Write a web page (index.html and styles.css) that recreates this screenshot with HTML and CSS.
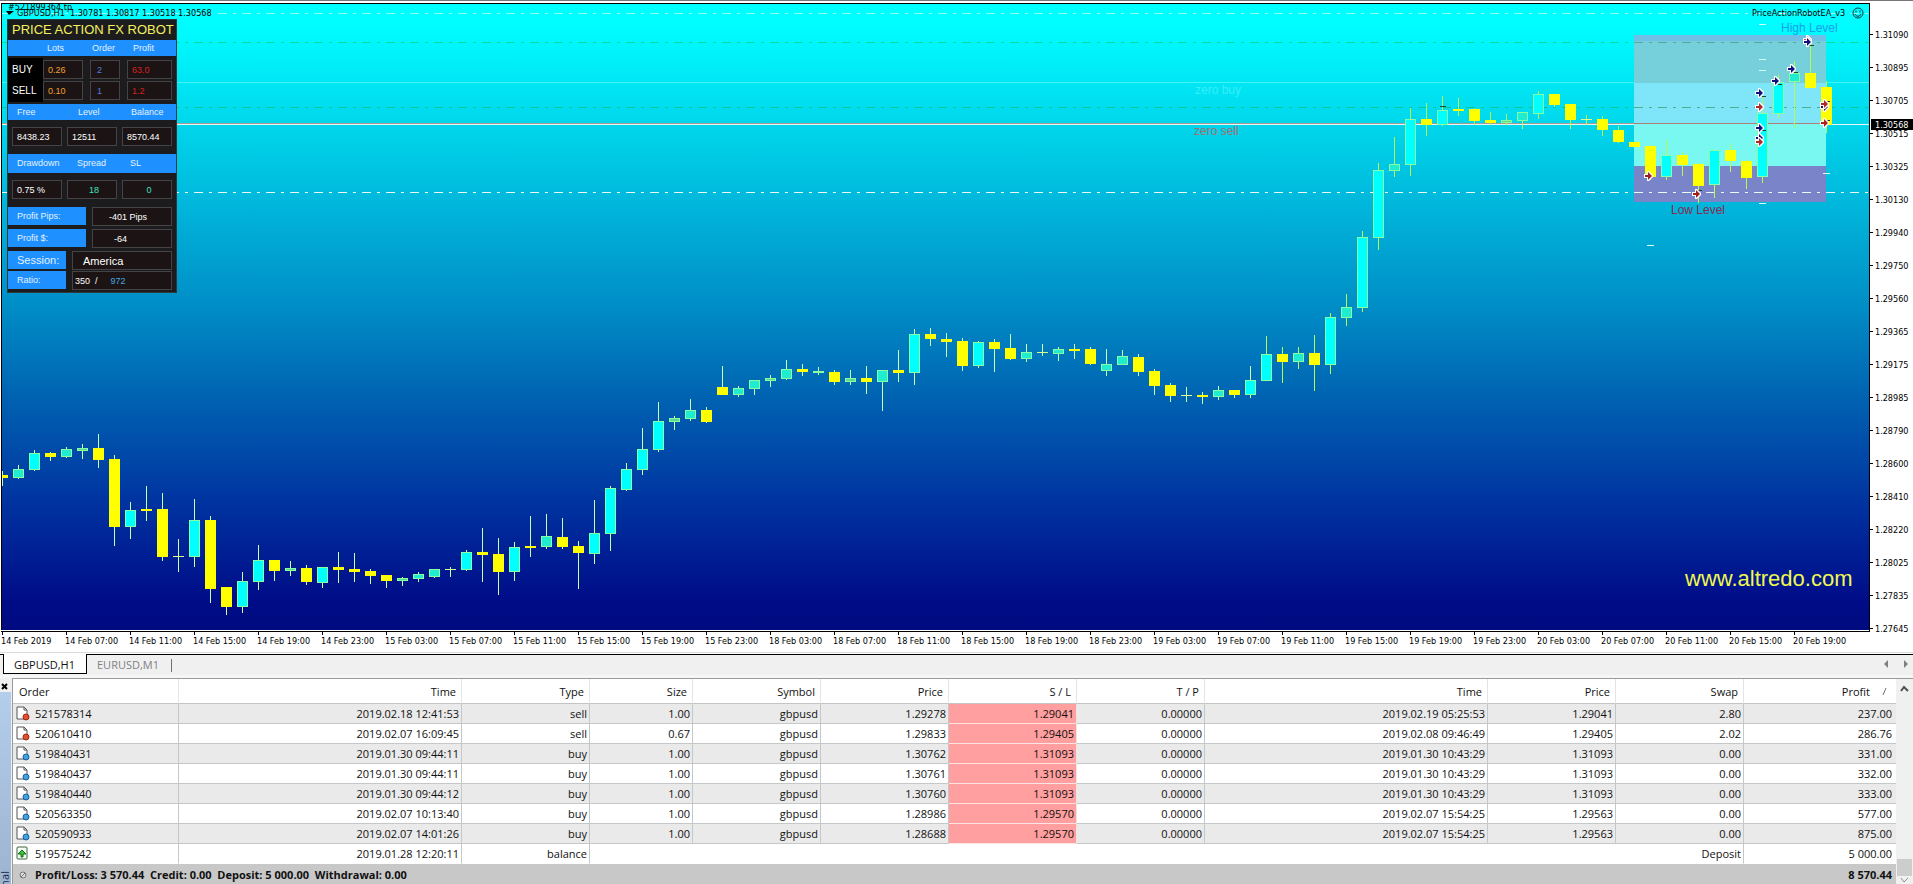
FILE: index.html
```html
<!DOCTYPE html>
<html lang="en">
<head>
<meta charset="utf-8">
<title>GBPUSD,H1</title>
<link rel="stylesheet" href="styles.css">
</head>
<body>
<main class="terminal">
  <section class="chart">
    <svg class="plot" viewBox="0 0 1913 654" role="img" aria-label="GBPUSD H1 candlestick chart">
      <defs>
        <linearGradient id="sky" x1="0" y1="0" x2="0" y2="1">
          <stop offset="0" stop-color="#00ffff"/>
          <stop offset="0.04" stop-color="#00fcff"/>
          <stop offset="0.25" stop-color="#00c8e4"/>
          <stop offset="0.48" stop-color="#008ec7"/>
          <stop offset="0.64" stop-color="#005fb0"/>
          <stop offset="0.8" stop-color="#0032a0"/>
          <stop offset="0.95" stop-color="#000d88"/>
          <stop offset="1" stop-color="#000a80"/>
        </linearGradient>
        <g id="arrow"><path d="M-4-2h3v-3h2l4 4v2l-4 4h-2v-3h-3z" fill="#fff"/><path d="M-3-1h3v-3l4 4-4 4v-3h-3z" fill="currentColor"/></g>
      </defs>
      <g class="crisp">
        <rect width="1913" height="1" fill="#77747a"/>
        <rect x="1" y="3" width="1869" height="1" fill="#000"/>
        <rect x="1" y="3" width="1" height="627" fill="#000"/>
        <rect x="2" y="4" width="1867" height="626" fill="url(#sky)"/>
        <rect x="1869" y="3" width="1" height="629" fill="#000"/>
        <rect x="1" y="631" width="1869" height="1" fill="#000"/>
        <rect y="652" width="1913" height="1" fill="#dcdcdc"/>
        <path class="dash" d="M2 13.5H1869" stroke="#8cffff"/>
        <path class="dash" d="M2 42.5H1869" stroke="#00dc9a"/>
        <path d="M2 82.5H1869" stroke="#40f4fa"/>
        <path class="dash" d="M2 107.5H1869" stroke="#00c896"/>
        <path d="M2 123.5H1634" stroke="#a89890"/>
        <path d="M2 124.5H1869" stroke="#e4f8f8"/>
        <g>
          <rect x="1634" y="35" width="192" height="6" fill="#70bfe4"/>
          <rect x="1634" y="41" width="192" height="42" fill="#76d0dc"/>
          <rect x="1634" y="83" width="192" height="41" fill="#7ee6f8"/>
          <rect x="1634" y="124" width="192" height="42" fill="#78f8f0"/>
          <rect x="1634" y="166" width="192" height="36" fill="#7a84c8"/>
          <path class="dash" d="M1634 42.5H1826" stroke="#56a898"/>
          <path class="dash" d="M1634 107.5H1826" stroke="#4cb090"/>
          <path d="M1634 123.5H1826" stroke="#b08078"/>
        </g>
        <path class="dash" d="M2 192.5H1869" stroke="#e8fafa"/>
        <g id="candles"></g>
        <path d="M1759 24.5h7M1780 13.5h7M1759 59.5h7M1759 70.5h7M1823 173.5h7M1759 203.5h7M1647 245.5h7" stroke="#d8ffff"/>
        <path d="M1440 106.5h6M1762 96.5h4M1778 84.5h4M1794 72.5h4M1809 45.5h5M1762 130.5h4M1824 101.5h6M1824 120.5h6M1697 190.5h5" stroke="#204830"/>
      </g>
      <g id="deals"></g>
      <g class="tick">
        <path d="M6 11h8l-5 4z"/>
        <text x="17" y="16" xml:space="preserve">GBPUSD,H1  1.30781 1.30817 1.30518 1.30568</text>
        <text x="8" y="10">#521899364 tp</text>
        <text x="1752" y="16">PriceActionRobotEA_v3</text>
        <g fill="none" stroke="#003c46"><circle cx="1858" cy="13" r="5"/><path d="M1855 14c1 3 5 3 6 0M1856 10.500v2M1860 10.500v2"/></g>
      </g>
      <g class="note">
        <text x="1781" y="32" fill="#1c9fe8">High Level</text>
        <text x="1671" y="214" fill="#8a2850">Low Level</text>
        <text x="1195" y="94" fill="#38eef8">zero buy</text>
        <text x="1194" y="135" fill="#a07070">zero sell</text>
      </g>
      <text class="brand" x="1685" y="586">www.altredo.com</text>
      <g id="axes" class="tick"></g>
    </svg>

    <div class="robot">
      <h1 class="robot-title">PRICE ACTION FX ROBOT</h1>
      <div class="bar bar-lots"><span>Lots</span><span>Order</span><span>Profit</span></div>
      <div class="lots">
        <div class="sides"><span>BUY</span><span>SELL</span></div>
        <span class="cell orange">0.26</span><span class="cell blue">2</span><span class="cell red">63.0</span>
        <span class="cell orange">0.10</span><span class="cell blue">1</span><span class="cell red">1.2</span>
      </div>
      <div class="bar bar-three"><span>Free</span><span>Level</span><span>Balance</span></div>
      <div class="trio"><span class="cell">8438.23</span><span class="cell">12511</span><span class="cell">8570.44</span></div>
      <div class="bar bar-three bar-tall"><span>Drawdown</span><span>Spread</span><span>SL</span></div>
      <div class="trio"><span class="cell">0.75 %</span><span class="cell teal mid">18</span><span class="cell teal mid">0</span></div>
      <div class="pair"><span class="tag">Profit Pips:</span><span class="cell pips">-401 Pips</span></div>
      <div class="pair"><span class="tag">Profit $:</span><span class="cell cash">-64</span></div>
      <div class="pair short"><span class="tag large">Session:</span><span class="cell large area">America</span></div>
      <div class="pair short"><span class="tag">Ratio:</span><span class="cell ratio"><span>350 &nbsp;/</span><span class="sky">972</span></span></div>
    </div>
  </section>

  <nav class="tabs">
    <button class="tab active" type="button">GBPUSD,H1</button>
    <button class="tab" type="button">EURUSD,M1</button>
    <span class="tab-rule"></span>
    <div class="tab-scroll">
      <button type="button" aria-label="Previous"><svg width="5" height="8"><path d="M4 0v8L0 4z" fill="#808080"/></svg></button>
      <button type="button" aria-label="Next"><svg width="5" height="8"><path d="M1 0v8l4-4z" fill="#808080"/></svg></button>
    </div>
  </nav>

  <section class="history">
    <aside class="side">
      <button type="button" class="close" aria-label="Close"><svg width="7" height="7"><path d="M1 1l5 5M6 1L1 6" stroke="#000" stroke-width="2"/></svg></button>
      <div class="side-bar"><span>Terminal</span></div>
    </aside>
    <table class="orders">
      <colgroup><col class="w-order"><col class="w-time"><col class="w-mid"><col class="w-size"><col class="w-mid"><col class="w-mid"><col class="w-mid"><col class="w-mid"><col class="w-time"><col class="w-mid"><col class="w-mid"><col class="w-profit"></colgroup>
      <thead><tr><th>Order</th><th>Time</th><th>Type</th><th>Size</th><th>Symbol</th><th>Price</th><th>S / L</th><th>T / P</th><th>Time</th><th>Price</th><th>Swap</th><th>Profit<svg class="sort" width="5" height="8"><path d="M4 0L1 7" stroke="#707070"/></svg></th></tr></thead>
      <tbody id="rows"></tbody>
      <tfoot><tr><td colspan="11"><svg class="dot" width="9" height="9"><circle cx="4" cy="4" r="3" fill="#ddd" stroke="#777"/><path d="M2 6l4-4" stroke="#777"/></svg><span class="sums">Profit/Loss: 3 570.44&nbsp; Credit: 0.00&nbsp; Deposit: 5 000.00&nbsp; Withdrawal: 0.00</span></td><td>8 570.44</td></tr></tfoot>
    </table>
    <div class="scroll">
      <svg width="9" height="7"><path d="M1 6l3-4 4 4" fill="none" stroke="#505050" stroke-width="2"/></svg>
      <span class="thumb"></span>
      <svg width="9" height="7"><path d="M1 1l3 4 4-4" fill="none" stroke="#909090"/></svg>
    </div>
  </section>
</main>
<script src="chart.js"></script>
</body>
</html>
```
FILE: styles.css
```css
* { box-sizing: border-box; }

body {
  margin: 0;
  background: #fff;
  color: #111;
  font: 11px/15px "Open Sans", "Noto Sans", sans-serif;
}

button {
  margin: 0;
  padding: 0;
  border: 0;
  background: none;
  color: inherit;
  font: inherit;
}

.terminal {
  min-height: 100vh;
  display: flex;
  flex-direction: column;
  border-bottom: 1px solid #111;
}

/* chart */
.chart { position: relative; }
.plot { display: block; width: 100%; height: auto; }
.crisp { shape-rendering: crispEdges; }
.dash { stroke-dasharray: 9 6 3 6; }
.tick { font: 9px "DejaVu Sans Condensed", "Noto Sans", sans-serif; fill: #000; }
.tick .now { fill: #fff; }
.note { font: 12px "Liberation Sans", Arial, sans-serif; }
.brand { font: 22px "Liberation Sans", Arial, sans-serif; fill: #f0f850; }

/* robot panel */
.robot {
  position: absolute;
  left: 7px;
  top: 19px;
  width: 170px;
  padding-bottom: 1px;
  border: 1px solid #30383c;
  background: #1c1c1e;
  color: #fff;
  font: 9px/15px "Liberation Sans", Arial, sans-serif;
}
.robot-title {
  margin: 0;
  padding-left: 4px;
  color: #f4f060;
  font-size: 13px;
  font-weight: 400;
  line-height: 20px;
  white-space: nowrap;
}
.bar { display: grid; background: #1e90ff; color: #e4f2ff; line-height: 16px; }
.bar-lots { grid-template-columns: 45px 41px 1fr; padding-left: 39px; }
.bar-three { grid-template-columns: 61px 53px 1fr; padding-left: 9px; }
.bar-three.bar-tall { grid-template-columns: 60px 53px 1fr; line-height: 19px; }
.cell {
  height: 19px;
  padding-left: 4px;
  border: 1px solid #444446;
  background: #1c1414;
  line-height: 18px;
}
.lots {
  display: grid;
  grid-template-columns: 28px 40px 30px 45px;
  column-gap: 7px;
  row-gap: 2px;
  padding: 4px 0 4px;
}
.sides {
  grid-row: span 2;
  display: grid;
  margin: -2px -7px -2px 0;
  padding: 2px 0 0 4px;
  background: #000;
  font-size: 10px;
  line-height: 20px;
}
.lots .orange { color: #f0a030; }
.lots .blue { padding-left: 6px; color: #4c80d8; }
.lots .red { color: #d82020; }
.trio { display: grid; grid-template-columns: repeat(3, 50px); gap: 5px; padding: 7px 4px 8px; }
.teal { color: #40e0c0; }
.mid { text-align: center; }
.pair {
  display: grid;
  grid-template-columns: 78px 80px;
  column-gap: 6px;
  margin-bottom: 3px;
}
.pair.short { grid-template-columns: 58px 100px; margin-bottom: 1px; }
.tag { height: 18px; padding-left: 9px; background: #1e90ff; color: #e4f2ff; line-height: 18px; }
.pips { padding-left: 16px; }
.cash { padding-left: 21px; }
.large { font-size: 11px; }
.area { padding-left: 10px; }
.ratio { display: flex; gap: 13px; padding-left: 2px; }
.sky { color: #40a8e0; }

/* chart tabs */
.tabs {
  display: flex;
  align-items: flex-start;
  height: 24px;
  padding-left: 3px;
  border-top: 1px solid #000;
  border-bottom: 3px solid #f6f6f6;
  background: #f0f0f0;
  color: #808080;
}
.tab { height: 18px; padding: 0 10px; line-height: 19px; }
.tab.active {
  height: 20px;
  padding: 0 11px 0 10px;
  margin-top: -1px;
  border: 1px solid #000;
  border-top: 0;
  background: #fff;
  color: #111;
  line-height: 21px;
}
.tab-rule { width: 1px; height: 13px; margin: 4px 0 0 2px; background: #707070; }
.tab-scroll { display: flex; gap: 14px; margin: 1px 5px 0 auto; }

/* order history */
.history { flex: 1; display: flex; background: #f0f0f0; }
.side { width: 12px; display: flex; flex-direction: column; }
.close { height: 14px; padding: 2px 0 0 1px; text-align: left; line-height: 7px; }
.side-bar {
  position: relative;
  flex: 1;
  width: 11px;
  overflow: hidden;
  background: linear-gradient(#b4cdea, #9cb4d0);
}
.side-bar span {
  position: absolute;
  top: 179px;
  left: -1px;
  color: #203050;
  line-height: 12px;
  writing-mode: vertical-rl;
  rotate: 180deg;
}
.orders {
  flex: 1;
  width: 100%;
  table-layout: fixed;
  border-spacing: 0;
  border-top: 1px solid #9a9a9a;
  border-left: 1px solid #9a9a9a;
  background: #fff;
}
.w-order { width: 166px; }
.w-time { width: 283px; }
.w-mid { width: 128px; }
.w-size { width: 103px; }
.w-profit { width: 152px; }
.orders th {
  height: 25px;
  padding: 0 5px 0 0;
  border-right: 1px solid #e4e4e4;
  border-bottom: 1px solid #c4c4c4;
  font-weight: 400;
  text-align: right;
}
.orders th:first-child { padding-left: 6px; text-align: left; }
.orders th:last-child { padding-right: 9px; border-right: 0; }
.sort { margin-left: 12px; }
.orders td {
  height: 20px;
  padding: 0 2px 0 0;
  border-right: 1px solid #c4c8c8;
  border-bottom: 1px solid #c4c8c8;
  text-align: right;
  white-space: nowrap;
}
.orders td:first-child { text-align: left; }
.orders td:last-child { padding-right: 4px; border-right: 0; }
.orders tbody tr:nth-child(odd) { background: #eaeaea; }
.orders tbody tr:last-child td { border-bottom-color: #fff; }
.orders .stop { border-bottom-color: #fbe4e4; border-right-color: #f4e0e0; background: #ff9f9f; background-clip: padding-box; }
.ticket { display: flex; align-items: center; gap: 5px; padding-left: 3px; }
.orders tfoot td { border: 0; background: #c8c8c8; font-weight: 700; }
.dot { margin: 0 7px 0 6px; vertical-align: -1px; }

.scroll {
  width: 17px;
  display: flex;
  flex-direction: column;
  align-items: center;
  padding-top: 6px;
  border-top: 1px solid #9a9a9a;
}
.thumb { width: 15px; height: 17px; margin: auto 0 1px; background: #cdcdcd; }
```
FILE: chart.js
```js
const NS = "http://www.w3.org/2000/svg";
const add = (parent, name, attrs, text) => {
  const el = document.createElementNS(NS, name);
  for (const key in attrs) el.setAttribute(key, attrs[key]);
  if (text) el.textContent = text;
  parent.append(el);
  return el;
};

// Each bar: high, body top, body bottom, low; "u" rising, "d" falling.
const bars = `471 475 478 486 d,465 469 478 479 u,450 453 470 471 u,452 453 457 461 d,447 449 457 458 u,444 448 451 459 u,434 448 460 468 d,455 459 527 546 d,502 510 527 539 u,486 509 511 521 d,493 509 557 561 d,539 556 557 572 d,499 520 557 567 u,516 520 589 603 d,587 587 607 615 d,572 581 607 613 u,545 560 582 590 u,560 560 571 581 d,561 568 571 576 u,565 568 582 585 d,567 567 583 588 u,552 567 570 583 d,553 569 572 582 d,569 571 576 584 d,575 575 581 588 d,577 578 581 586 u,572 574 579 582 u,569 569 577 578 u,567 569 570 577 d,550 552 570 571 u,528 552 555 582 d,538 554 572 595 d,542 547 572 581 u,516 546 548 557 d,514 536 547 549 u,518 537 547 549 d,541 546 553 589 d,500 533 554 564 u,486 488 534 551 u,463 469 490 491 u,428 449 470 475 u,402 421 450 452 u,416 418 422 430 u,399 410 419 421 u,407 410 422 423 d,366 387 395 395 d,386 388 395 397 u,380 380 389 395 u,375 378 381 387 u,360 369 379 380 u,364 369 372 376 d,367 371 373 375 u,370 372 382 385 d,370 378 382 385 u,366 378 382 394 d,370 370 382 411 u,350 370 373 382 d,329 334 373 385 u,328 334 339 346 d,333 339 342 357 d,338 341 366 371 d,341 342 366 368 u,339 342 349 372 d,334 348 359 360 d,344 352 359 362 u,344 352 353 356 d,347 349 354 361 u,344 349 351 359 d,347 349 364 365 d,349 364 371 376 u,350 356 365 365 u,354 357 372 376 d,369 371 386 395 d,383 385 396 402 d,387 395 396 402 d,392 395 397 404 d,386 390 397 400 u,390 390 395 398 d,366 380 395 398 u,336 354 381 381 u,347 354 362 383 d,347 353 362 369 u,335 353 365 391 d,313 317 365 374 u,294 307 318 326 u,231 237 308 312 u,163 170 238 250 u,137 164 171 177 u,108 119 165 176 u,103 119 125 136 d,96 110 125 126 u,98 109 111 116 d,108 109 121 125 d,112 120 123 125 d,114 120 123 125 u,112 112 121 129 u,91 94 114 119 u,94 94 105 107 d,104 104 120 129 d,115 119 120 125 d,116 119 130 136 d,126 130 142 143 d,142 142 147 147 d,145 146 177 180 d,140 155 177 180 u,152 155 165 176 d,163 164 186 203 d,150 150 185 198 u,144 150 161 172 d,160 161 178 189 d,97 113 177 183 u,75 82 114 118 u,61 73 82 128 u,43 73 88 88 d,81 87 125 133 d`;
const candles = document.getElementById("candles");
bars.split(",").forEach((bar, i) => {
  const [high, top, bottom, low, dir] = bar.split(" ");
  const x = 2 + i * 16;
  const left = Math.max(2, x - 5);
  const line = x > 1250 ? "#b4fa50" : "#c8ffb0";
  add(candles, "rect", { x, y: high, width: 1, height: low - high, fill: line });
  const width = x + 6 - left;
  const height = bottom - top;
  if (dir === "d") {
    add(candles, "rect", { x: left, y: top, width, height, fill: height < 2 ? "#dcff90" : "#ffff00" });
  } else {
    add(candles, "rect", { x: left, y: top, width, height, fill: "#88ffa0" });
    if (height > 2) add(candles, "rect", { x: left + 1, y: +top + 1, width: width - 2, height: height - 2, fill: height < 5 ? "#60d890" : height < 13 ? "#20ecd0" : "#00ffff" });
  }
});

const deals = document.getElementById("deals");
[[1807, 40, "#c05070"], [1807, 42, "#101080"], [1791, 69, "#101080"], [1775, 81, "#101080"], [1759, 93, "#101080"], [1759, 107, "#b02828"], [1759, 128, "#101080"], [1759, 138, "#101080"], [1759, 142, "#b02828"], [1648, 176, "#a02020"], [1696, 194, "#a02020"], [1824, 107, "#301040"], [1824, 104, "#b02828"], [1824, 123, "#b02020"]]
  .forEach(([x, y, color]) => add(deals, "use", { href: "#arrow", transform: `translate(${x} ${y})`, color }));

const axes = document.getElementById("axes");
["31090", "30895", "30705", "30515", "30325", "30130", "29940", "29750", "29560", "29365", "29175", "28985", "28790", "28600", "28410", "28220", "28025", "27835", "27645"].forEach((p, i) => {
  const y = 34 + i * 33;
  add(axes, "rect", { x: 1870, y, width: 3, height: 1 });
  add(axes, "text", { x: 1875, y: y + 4 }, "1." + p);
});
add(axes, "rect", { x: 1871, y: 119, width: 42, height: 11, fill: "#000" });
add(axes, "text", { x: 1875, y: 128, class: "now" }, "1.30568");

const hours = ["03:00", "07:00", "11:00", "15:00", "19:00", "23:00"];
for (let i = 0; i < 29; i++) {
  const x = 2 + i * 64;
  const day = [14, 15, 18, 19, 20][Math.floor(i / 6)];
  add(axes, "rect", { x, y: 632, width: 1, height: 3 });
  add(axes, "text", { x: Math.max(1, x - 1), y: 644 }, i ? `${day} Feb ${hours[i % 6]}` : "14 Feb 2019");
}

const page = "<path d='M1 1h7l3 3v9H1z' fill='#fff' stroke='#555'/><path d='M8 1v3h3' fill='none' stroke='#555'/>";
const icons = {
  sell: page + "<circle cx='10' cy='11' r='3' fill='#e05030' stroke='#a02810'/>",
  buy: page + "<circle cx='10' cy='11' r='3' fill='#40a0e0' stroke='#1860a0'/>",
  balance: "<rect x='1' y='1' width='10' height='12' rx='1' fill='#f4fff4' stroke='#406040'/><path d='M6 4l4 4H7v3H5V8H2z' fill='#40c040' stroke='#107010'/>"
};
const orders = [
  ["521578314", "2019.02.18 12:41:53", "sell", "1.00", "gbpusd", "1.29278", "1.29041", "0.00000", "2019.02.19 05:25:53", "1.29041", "2.80", "237.00"],
  ["520610410", "2019.02.07 16:09:45", "sell", "0.67", "gbpusd", "1.29833", "1.29405", "0.00000", "2019.02.08 09:46:49", "1.29405", "2.02", "286.76"],
  ["519840431", "2019.01.30 09:44:11", "buy", "1.00", "gbpusd", "1.30762", "1.31093", "0.00000", "2019.01.30 10:43:29", "1.31093", "0.00", "331.00"],
  ["519840437", "2019.01.30 09:44:11", "buy", "1.00", "gbpusd", "1.30761", "1.31093", "0.00000", "2019.01.30 10:43:29", "1.31093", "0.00", "332.00"],
  ["519840440", "2019.01.30 09:44:12", "buy", "1.00", "gbpusd", "1.30760", "1.31093", "0.00000", "2019.01.30 10:43:29", "1.31093", "0.00", "333.00"],
  ["520563350", "2019.02.07 10:13:40", "buy", "1.00", "gbpusd", "1.28986", "1.29570", "0.00000", "2019.02.07 15:54:25", "1.29563", "0.00", "577.00"],
  ["520590933", "2019.02.07 14:01:26", "buy", "1.00", "gbpusd", "1.28688", "1.29570", "0.00000", "2019.02.07 15:54:25", "1.29563", "0.00", "875.00"],
  ["519575242", "2019.01.28 12:20:11", "balance", "Deposit", "5 000.00"]
];
document.getElementById("rows").innerHTML = orders.map((row) => {
  const short = row.length < 12;
  return "<tr>" + row.map((value, i) => {
    if (i === 0) return `<td><span class="ticket"><svg width="14" height="15">${icons[row[2]]}</svg>${value}</span></td>`;
    if (short && i === 3) return `<td colspan="8">${value}</td>`;
    return `<td${!short && i === 6 ? ' class="stop"' : ""}>${value}</td>`;
  }).join("") + "</tr>";
}).join("");
```
